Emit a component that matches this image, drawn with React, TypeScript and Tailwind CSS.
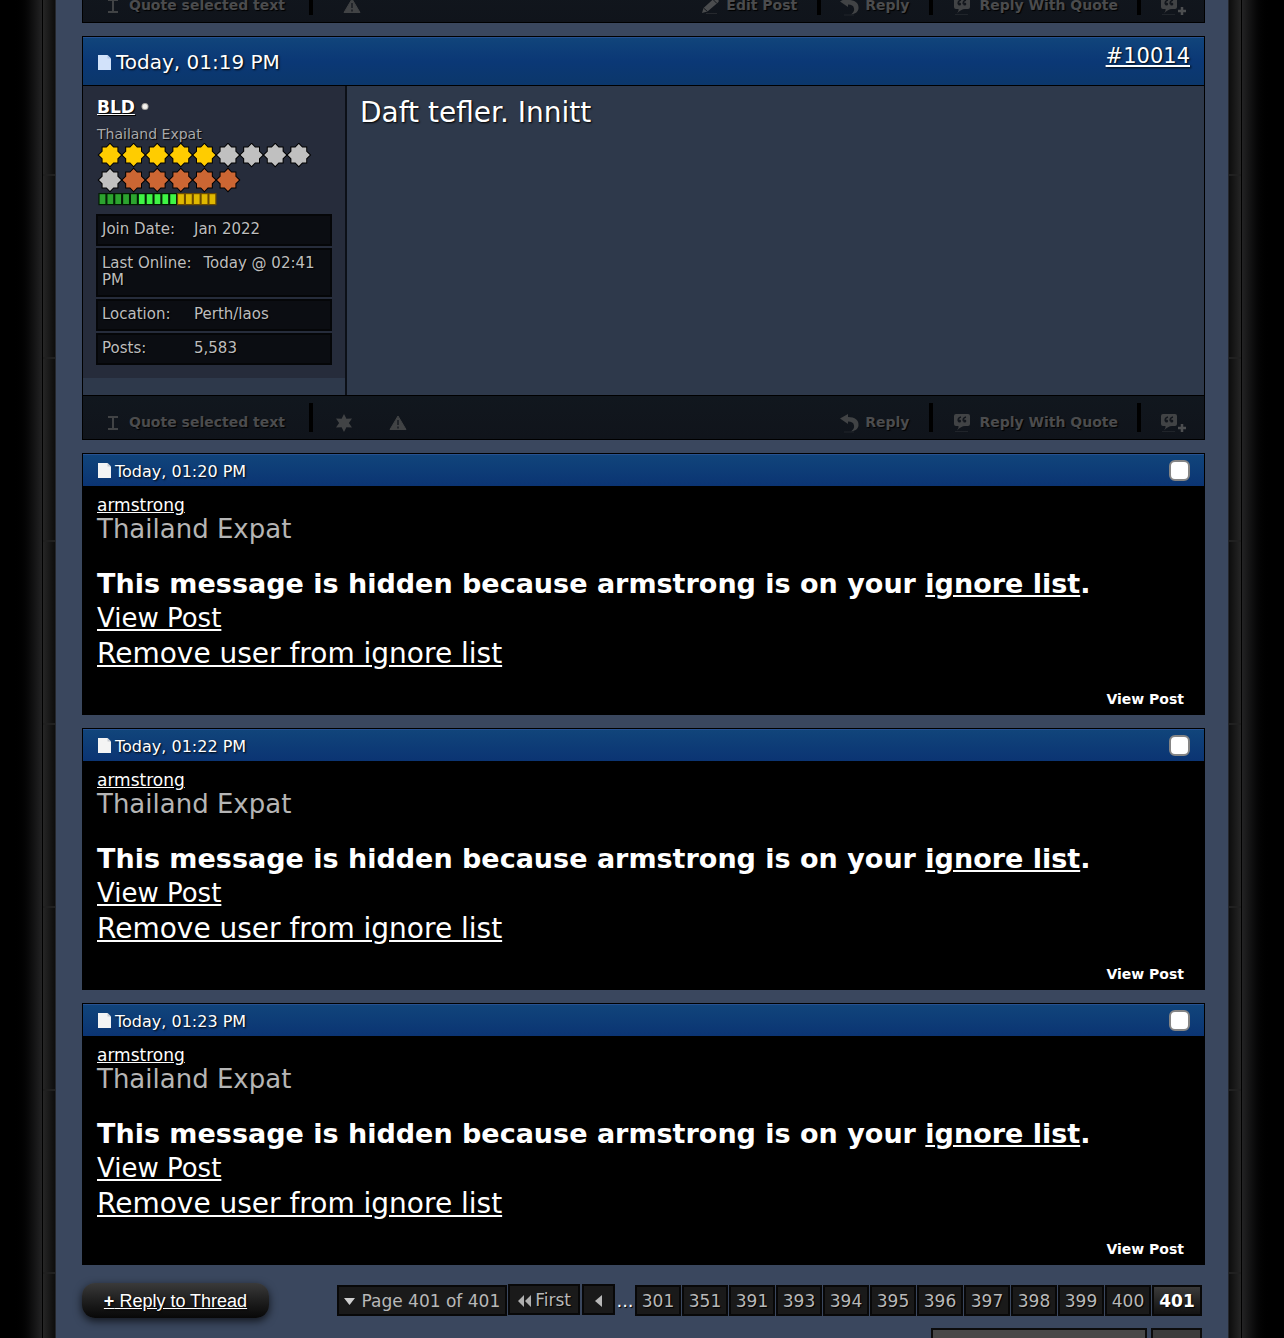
import React from 'react';

interface HiddenPost {
  id: number;
  time: string;
  author: string;
}

const hiddenPosts: HiddenPost[] = [
  { id: 10015, time: 'Today, 01:20 PM', author: 'armstrong' },
  { id: 10016, time: 'Today, 01:22 PM', author: 'armstrong' },
  { id: 10017, time: 'Today, 01:23 PM', author: 'armstrong' }
];

const pages = [301, 351, 391, 393, 394, 395, 396, 397, 398, 399, 400];

const STAR = '0,-11 3.4,-7.4 7.4,-7.4 7.4,-3.4 11,0 7.4,3.4 7.4,7.4 3.4,7.4 0,11 -3.4,7.4 -7.4,7.4 -7.4,3.4 -11,0 -7.4,-3.4 -7.4,-7.4 -3.4,-7.4';

const starColors = [
  ...Array(5).fill('#ffcc00'),
  ...Array(5).fill('#c0c0c0'),
  ...Array(5).fill('#cc6633')
];

const RankStars = () => (
  <svg width="216" height="50" viewBox="0 0 216 50" className="block" aria-hidden="true">
    {starColors.map((color, i) => (
      <polygon
        key={i}
        points={STAR}
        fill={color}
        stroke="#000"
        strokeWidth="2"
        paintOrder="stroke"
        transform={`translate(${14 + (i % 9) * 23.6} ${i < 9 ? 12 : 37})`}
      />
    ))}
  </svg>
);

const ReputationBar = () => (
  <svg width="122" height="13" viewBox="0 0 122 13" className="block" aria-hidden="true">
    {Array.from({ length: 15 }, (_, i) => (
      <rect
        key={i}
        x={3 + i * 7.85}
        y="0.6"
        width="7"
        height="11"
        fill={i < 5 ? '#2ca42f' : i < 10 ? '#3ff545' : '#e0b800'}
        stroke={i < 10 ? '#021a03' : '#6b4a00'}
        strokeWidth="1.2"
      />
    ))}
  </svg>
);

const PostIcon = ({ fill, fold }: { fill: string; fold: string }) => (
  <svg width="16" height="17" viewBox="0 0 16 17" className="shrink-0" aria-hidden="true">
    <path d="M1 1h9.500L14 4.500V16H1z" fill={fill} />
    <path d="M10.500 1v3.500H14z" fill={fold} />
  </svg>
);

const CursorIcon = () => (
  <svg width="12" height="14" viewBox="0 0 12 14" aria-hidden="true">
    <path d="M1 1h10M1 13h10M6 1v12" stroke="#414345" strokeWidth="2" fill="none" />
  </svg>
);

const StarIcon = () => (
  <svg width="18" height="18" viewBox="0 0 18 18" aria-hidden="true">
    <path d="M9 0l2.4 4.7L17 4.5 13.9 9l3.1 4.5-5.6-.2L9 18l-2.4-4.7-5.6.2L4.1 9 1 4.5l5.6.2z" fill="#414345" />
  </svg>
);

const WarningIcon = () => (
  <svg width="18" height="16" viewBox="0 0 18 16" aria-hidden="true">
    <path d="M9 1l8 13.5H1z" fill="#414345" stroke="#414345" strokeLinejoin="round" />
    <path d="M9 5v5M9 11.5v2" stroke="#181c22" strokeWidth="1.5" />
  </svg>
);

const PencilIcon = () => (
  <svg width="20" height="18" viewBox="0 0 20 18" aria-hidden="true">
    <path d="M1 16l1.500-5L13 1.500q1.500-1.500 3 0l1 1q1.500 1.500 0 3L6.500 14.500z" fill="#4a4c4e" />
    <path d="M12 2.500l4 4M2.500 11l4 3.500" stroke="#15191f" />
    <path d="M5 16.500h11" stroke="#26292e" />
  </svg>
);

const ReplyIcon = () => (
  <svg width="20" height="20" viewBox="0 0 20 20" aria-hidden="true">
    <path d="M0 5.5L8 1v3c7 0 11 3 10.500 8.500C18.200 16 15 18 11 18.500c2.500-2 3.500-4 3-6C13.500 9.500 11.500 8.500 8 8.500V11z" fill="#414345" />
    <path d="M4 19h10" stroke="#20242a" />
  </svg>
);

const QuoteIcon = ({ plus = false }: { plus?: boolean }) => (
  <svg width={plus ? 27 : 18} height="20" viewBox={plus ? '0 0 27 20' : '0 0 18 20'} aria-hidden="true">
    <path d="M3 1h12q2 0 2 2v8q0 2-2 2h-3q-4 0-8 4.500Q6 15 5.500 13H3q-2 0-2-2V3q0-2 2-2z" fill="#414345" />
    <path d="M8 4C5.800 4.500 4.800 6 5.200 8M13 4c-2.200.5-3.200 2-2.800 4" stroke="#12161c" strokeWidth="1.3" fill="none" />
    <circle cx="6.500" cy="8" r="1.600" fill="#12161c" />
    <circle cx="11.700" cy="8" r="1.600" fill="#12161c" />
    <path d="M2 18.500h13" stroke="#20242a" />
    {plus && <path d="M22 11v8M18 15h8" stroke="#4c4e50" strokeWidth="2.5" />}
  </svg>
);

const Separator = () => <span className="h-[29px] w-1 shrink-0 bg-black" />;

const PostToolbar = ({ canEdit = false }: { canEdit?: boolean }) => (
  <div className="flex h-[45px] shrink-0 items-center border border-black bg-gradient-to-b from-[#11171e] to-[#10141b] text-[14px] font-bold text-[#4b4c4e] text-shadow-[1px_1px_1px_#000]">
    <a href="#quote-selected" className="flex items-center gap-[10px] pt-[10px] pl-6">
      <CursorIcon />
      Quote selected text
    </a>
    <span className="flex grow items-center pl-6">
      <Separator />
      {!canEdit && (
        <a href="#award" aria-label="Reputation" className="pt-[10px] pl-[22px]">
          <StarIcon />
        </a>
      )}
      <a href="#report" aria-label="Report post" className={canEdit ? 'pt-[10px] pl-[30px]' : 'pt-[10px] pl-9'}>
        <WarningIcon />
      </a>
    </span>
    {canEdit && (
      <>
        <a href="#edit" className="flex items-center gap-[5px] pt-[10px] pr-5">
          <PencilIcon />
          Edit Post
        </a>
        <Separator />
      </>
    )}
    <a href="#reply" className="flex items-center gap-[5px] pt-[10px] pr-5 pl-[19px]">
      <ReplyIcon />
      Reply
    </a>
    <Separator />
    <a href="#reply-quote" className="flex items-center gap-2 pt-[10px] pr-[19px] pl-[20px]">
      <QuoteIcon />
      Reply With Quote
    </a>
    <Separator />
    <a href="#multi-quote" aria-label="Multi-quote" className="pt-[10px] pr-[17px] pl-[19px]">
      <QuoteIcon plus />
    </a>
  </div>
);

const Stat = ({ label, value }: { label: string; value: string }) => (
  <div className="border-2 border-[#050608] bg-[#0b0d12] px-1 pt-[5px] pb-[6px] text-[15px] leading-[17px] text-[#bdbdbd]">
    <dt className="mr-3 inline-block min-w-[80px]">{label}</dt>
    <dd className="inline">{value}</dd>
  </div>
);

const FullPost = () => (
  <article>
    <header className="flex h-[50px] justify-between border border-black bg-gradient-to-b from-[#11457b] via-[#0b3876] to-[#0b376b] px-[14px] text-[20px] text-white inset-shadow-[0_1px_0_#275190] text-shadow-[1px_1px_2px_#000]">
      <span className="flex items-center pt-[2px]">
        <PostIcon fill="#d2e2fa" fold="#b3c8ea" />
        <span className="pl-[3px]">Today, 01:19 PM</span>
      </span>
      <a href="#10014" className="pt-1 text-[21px] underline">#10014</a>
    </header>
    <div className="flex border-x border-black bg-[#2e394b]">
      <div className="w-[264px] shrink-0 border-r-2 border-[#0c1017] pb-[17px]">
        <div className="bg-[#262c3b] px-[13px] pt-[10px] pb-[13px] text-shadow-[1px_1px_1px_#000]">
          <div className="flex items-center gap-[6px] pl-px leading-[22px]">
            <a href="#bld" className="text-[17px] font-bold text-white underline">BLD</a>
            <svg width="8" height="8" viewBox="0 0 8 8" aria-label="offline">
              <circle cx="4" cy="3.5" r="3.5" fill="#a9a7a3" />
              <circle cx="4" cy="3.5" r="2.5" fill="#f4f2ee" />
            </svg>
          </div>
          <p className="pt-[7px] pl-px text-[14px] leading-[18px] text-[#a9a9a9]">Thailand Expat</p>
          <RankStars />
          <ReputationBar />
          <dl className="mt-2 flex flex-col gap-[2px]">
            <Stat label="Join Date:" value="Jan 2022" />
            <Stat label="Last Online:" value="Today @ 02:41 PM" />
            <Stat label="Location:" value="Perth/laos" />
            <Stat label="Posts:" value="5,583" />
          </dl>
        </div>
      </div>
      <p className="px-[13px] pt-[9px] text-[28px] leading-9 text-white text-shadow-[1px_1px_2px_#000]">Daft tefler. Innitt</p>
    </div>
    <PostToolbar />
  </article>
);

const HiddenPostCard = ({ post }: { post: HiddenPost }) => (
  <article className="border border-black bg-black text-white">
    <header className="flex h-8 items-center justify-between bg-gradient-to-b from-[#11457b] to-[#0b3473] px-[14px] pt-px text-[16px] inset-shadow-[0_1px_0_#275190] text-shadow-[1px_1px_2px_#000]">
      <span className="flex items-center gap-[2px]">
        <PostIcon fill="#f4f4f4" fold="#c9cdd4" />
        <span className="pt-[2px]">{post.time}</span>
      </span>
      <input
        type="checkbox"
        aria-label={`Select post ${post.id}`}
        className="h-[21px] w-[21px] appearance-none rounded-md border-2 border-[#858585] bg-white"
      />
    </header>
    <div className="px-[14px] pt-2 pb-[5px]">
      <a href="#profile" className="block text-[17px] leading-[22px] underline">{post.author}</a>
      <p className="text-[26px] leading-[26px] text-[#b5b5b5]">Thailand Expat</p>
      <p className="pt-6 text-[27px] leading-[35px] font-bold">
        This message is hidden because {post.author} is on your <a href="#ignore" className="underline">ignore list</a>.
      </p>
      <p className="text-[26px] leading-[35px]"><a href="#view" className="underline">View Post</a></p>
      <p className="text-[28px] leading-[35px]"><a href="#remove" className="underline">Remove user from ignore list</a></p>
      <div className="flex justify-end pt-[18px] pr-[6px]">
        <a href="#view" className="text-[14px] leading-5 font-bold">View Post</a>
      </div>
    </div>
  </article>
);

const pageBox = 'flex h-[31px] items-center justify-center border-2 border-[#080808] bg-[#1a1a1a] pt-[2px]';

const Pager = () => (
  <nav aria-label="Pages" className="flex items-center gap-px text-[17px] text-[#b8b8b8] text-shadow-[1px_1px_1px_#000]">
    <button type="button" className={`${pageBox} gap-[7px] px-[5px]`}>
      <svg width="11" height="8" viewBox="0 0 11 8" aria-hidden="true">
        <path d="M0 0h11L5.5 7z" fill="#cfcfcf" />
      </svg>
      Page 401 of 401
    </button>
    <a href="#first" className={`${pageBox} mb-[2px] gap-[3px] px-[7px]`}>
      <svg width="15" height="12" viewBox="0 0 15 12" aria-hidden="true">
        <path d="M7 0v12L1 6zM14 0v12L8 6z" fill="#b0b0b0" />
      </svg>
      First
    </a>
    <a href="#prev" aria-label="Previous page" className={`${pageBox} mb-[2px] ml-px w-[33px]`}>
      <svg width="7" height="12" viewBox="0 0 7 12" aria-hidden="true">
        <path d="M7 0v12L0 6z" fill="#b8b8b8" />
      </svg>
    </a>
    <span className="w-[18px] text-center text-[18px] text-white">...</span>
    {pages.map(page => (
      <a key={page} href={`#page${page}`} className={`${pageBox} w-[46px]`}>{page}</a>
    ))}
    <span className="flex h-[31px] w-[50px] items-center justify-center border-2 border-[#080808] bg-gradient-to-b from-[#3a3a3a] to-[#121212] pt-[2px] font-bold text-white">401</span>
  </nav>
);

const Rail = ({ side }: { side: 'left' | 'right' }) => (
  <div className={side === 'left' ? 'flex w-14 shrink-0' : 'flex w-14 shrink-0 flex-row-reverse'} aria-hidden="true">
    <div
      className={
        side === 'left'
          ? 'grow bg-gradient-to-r from-black from-30% to-[#232324]'
          : 'grow bg-gradient-to-l from-black from-30% to-[#232324]'
      }
    />
    <div className="w-px bg-black" />
    <div
      className={
        side === 'left'
          ? 'w-3 bg-gradient-to-r from-[#262626] to-[#0d0d0d]'
          : 'w-3 bg-gradient-to-r from-[#0d0d0d] to-[#262626]'
      }
    >
      {/* panel seams */}
      <div className="flex flex-col gap-[181px] pt-[174px]">
        {Array.from({ length: 7 }, (_, i) => (
          <span key={i} className="h-[2px] bg-[#202020]" />
        ))}
      </div>
    </div>
    <div className="w-px bg-[#24272d]" />
  </div>
);

export default function App() {
  return (
    <div className="flex h-screen overflow-hidden bg-black font-['Verdana','DejaVu_Sans',sans-serif]">
      <Rail side="left" />
      <main className="flex min-w-0 grow flex-col gap-[13px] bg-[#3a475e] pr-[23px] pl-[26px]">
        <div className="flex h-[23px] shrink-0 flex-col justify-end overflow-hidden">
          <PostToolbar canEdit />
        </div>
        <FullPost />
        {hiddenPosts.map(post => (
          <HiddenPostCard key={post.id} post={post} />
        ))}
        <div className="flex items-center justify-between pt-[5px] pr-[3px]">
          <a
            href="#reply"
            className="flex h-[35px] w-[187px] items-center justify-center rounded-[13px] bg-gradient-to-b from-[#3a3a3a] via-[#1f1f1f] to-[#080808] pt-px font-['Liberation_Sans',sans-serif] text-[18px] text-white underline shadow-[0_3px_8px_rgba(0,0,0,0.7)] text-shadow-[1px_1px_2px_#000]"
          >
            <span><b>+</b> Reply to Thread</span>
          </a>
          <Pager />
        </div>
        <div className="-mt-[3px] flex h-8 shrink-0 justify-end gap-1 pr-[3px]">
          <div className="w-[216px] border-2 border-[#0c0c0c] bg-[#484848]" />
          <div className="w-[51px] border-2 border-[#0c0c0c] bg-[#3c3c3c]" />
        </div>
      </main>
      <Rail side="right" />
    </div>
  );
}
